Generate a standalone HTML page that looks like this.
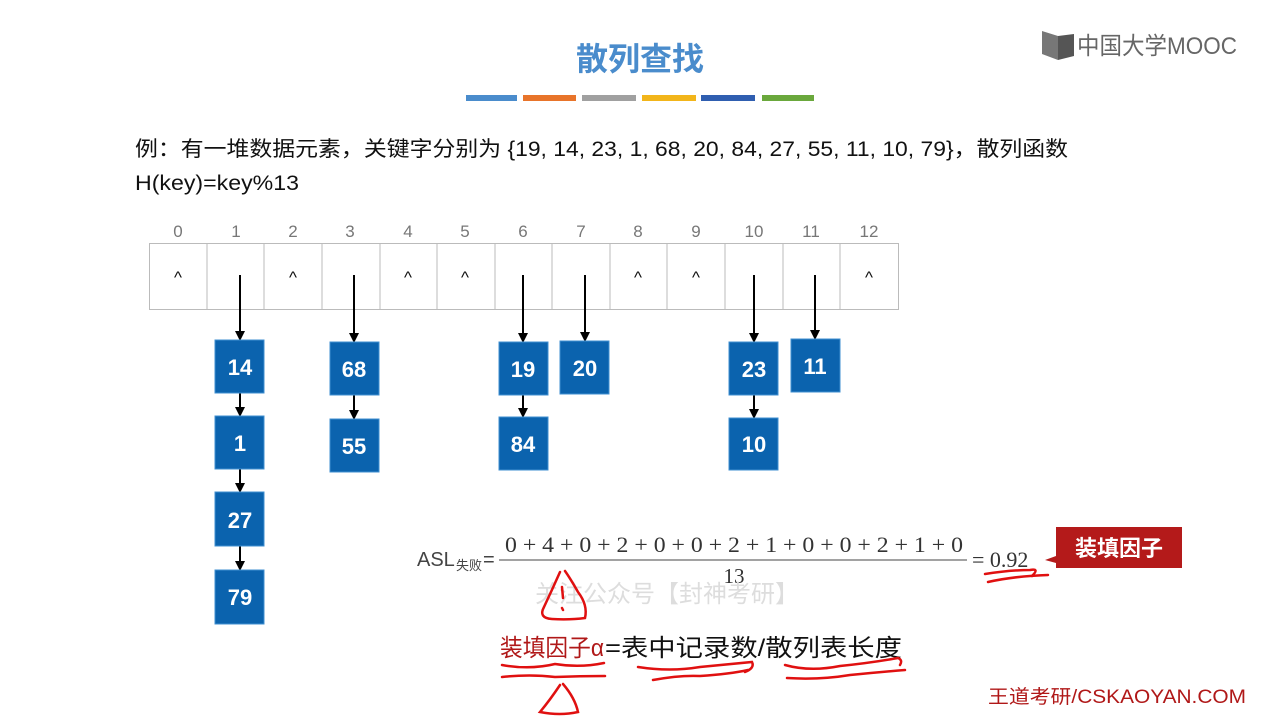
<!DOCTYPE html>
<html><head><meta charset="utf-8"><style>
html,body{margin:0;padding:0;background:#fff;width:1280px;height:720px;overflow:hidden}
svg{display:block}
text{font-family:"Liberation Sans","Noto Sans CJK SC",sans-serif}
.s{font-family:"Liberation Serif",serif}
</style></head><body>
<svg width="1280" height="720" viewBox="0 0 1280 720" xmlns="http://www.w3.org/2000/svg">
<defs><marker id="ah" markerWidth="10" markerHeight="10" refX="8" refY="5" orient="auto" markerUnits="userSpaceOnUse"><path d="M0,0 L10,5 L0,10 z" fill="#000"/></marker></defs>
<text x="640" y="70" text-anchor="middle" font-size="32" font-weight="bold" fill="#4a8ccc">散列查找</text>
<rect x="466" y="95" width="51" height="6" fill="#4a8ccc"/>
<rect x="523" y="95" width="53" height="6" fill="#e8742a"/>
<rect x="582" y="95" width="54" height="6" fill="#a0a0a0"/>
<rect x="642" y="95" width="54" height="6" fill="#f2b51a"/>
<rect x="701" y="95" width="54" height="6" fill="#2f5eb0"/>
<rect x="762" y="95" width="52" height="6" fill="#6aa83c"/>
<path d="M1042,31 L1058,36 L1058,60 L1042,54 z" fill="#777"/>
<path d="M1058,36 L1074,34 L1074,56 L1058,60 z" fill="#555"/>
<text x="1077" y="54" font-size="24" fill="#666" textLength="160" lengthAdjust="spacingAndGlyphs">中国大学MOOC</text>
<text x="135" y="156" font-size="21" fill="#111" textLength="933" lengthAdjust="spacingAndGlyphs">例：有一堆数据元素，关键字分别为 {19, 14, 23, 1, 68, 20, 84, 27, 55, 11, 10, 79}，散列函数</text>
<text x="135" y="190" font-size="21" fill="#111" textLength="164" lengthAdjust="spacingAndGlyphs">H(key)=key%13</text>
<g font-size="17" fill="#777" text-anchor="middle">
<text x="178" y="237">0</text><text x="236" y="237">1</text><text x="293" y="237">2</text><text x="350" y="237">3</text><text x="408" y="237">4</text><text x="465" y="237">5</text><text x="523" y="237">6</text><text x="581" y="237">7</text><text x="638" y="237">8</text><text x="696" y="237">9</text><text x="754" y="237">10</text><text x="811" y="237">11</text><text x="869" y="237">12</text>
</g>
<g fill="none" stroke="#bbb" stroke-width="1">
<rect x="149.5" y="243.5" width="749" height="66"/>
<path d="M207,244V309M264,244V309M322,244V309M380,244V309M437,244V309M495,244V309M552,244V309M610,244V309M667,244V309M725,244V309M783,244V309M840,244V309"/>
</g>
<g font-size="17" fill="#111" text-anchor="middle">
<text x="178" y="283">^</text><text x="293" y="283">^</text><text x="408" y="283">^</text><text x="465" y="283">^</text><text x="638" y="283">^</text><text x="696" y="283">^</text><text x="869" y="283">^</text>
</g>
<g stroke="#000" stroke-width="2" marker-end="url(#ah)">
<line x1="240" y1="275" x2="240" y2="339"/>
<line x1="354" y1="275" x2="354" y2="341"/>
<line x1="523" y1="275" x2="523" y2="341"/>
<line x1="585" y1="275" x2="585" y2="340"/>
<line x1="754" y1="275" x2="754" y2="341"/>
<line x1="815" y1="275" x2="815" y2="338"/>
<line x1="240" y1="393" x2="240" y2="415"/>
<line x1="240" y1="469" x2="240" y2="491"/>
<line x1="240" y1="546" x2="240" y2="569"/>
<line x1="354" y1="395" x2="354" y2="418"/>
<line x1="523" y1="395" x2="523" y2="416"/>
<line x1="754" y1="395" x2="754" y2="417"/>
</g>
<g fill="#0b63ae" stroke="#3f8fd0" stroke-width="1">
<rect x="215" y="340" width="49" height="53"/><rect x="215" y="416" width="49" height="53"/><rect x="215" y="492" width="49" height="54"/><rect x="215" y="570" width="49" height="54"/>
<rect x="330" y="342" width="49" height="53"/><rect x="330" y="419" width="49" height="53"/>
<rect x="499" y="342" width="49" height="53"/><rect x="499" y="417" width="49" height="53"/>
<rect x="560" y="341" width="49" height="53"/>
<rect x="729" y="342" width="49" height="53"/><rect x="729" y="418" width="49" height="52"/>
<rect x="791" y="339" width="49" height="53"/>
</g>
<g font-size="22" font-weight="bold" fill="#fff" text-anchor="middle">
<text x="240" y="375">14</text><text x="240" y="451">1</text><text x="240" y="528">27</text><text x="240" y="605">79</text>
<text x="354" y="377">68</text><text x="354" y="454">55</text>
<text x="523" y="377">19</text><text x="523" y="452">84</text>
<text x="585" y="376">20</text>
<text x="754" y="377">23</text><text x="754" y="452">10</text>
<text x="815" y="374">11</text>
</g>
<text x="417" y="566" font-size="20" fill="#444">ASL</text>
<text x="456" y="570" font-size="13" fill="#444">失败</text>
<text x="483" y="566" font-size="20" fill="#444">=</text>
<line x1="499" y1="560" x2="967" y2="560" stroke="#444" stroke-width="1"/>
<text x="734" y="552" font-size="22" fill="#333" text-anchor="middle" class="s" textLength="458" lengthAdjust="spacingAndGlyphs">0 + 4 + 0 + 2 + 0 + 0 + 2 + 1 + 0 + 0 + 2 + 1 + 0</text>
<text x="734" y="583" font-size="21" fill="#333" text-anchor="middle" class="s">13</text>
<text x="972" y="567" font-size="22" fill="#333" class="s">= 0.92</text>
<path d="M1056,527 H1182 V568 H1056 V563 L1045,560 L1056,556 z" fill="#b41a1a"/>
<text x="1119" y="556" font-size="22" font-weight="bold" fill="#fff" text-anchor="middle">装填因子</text>
<text x="535" y="602" font-size="24" fill="#ddd">关注公众号【封神考研】</text>
<text x="500" y="656" font-size="24" fill="#b01818" textLength="104" lengthAdjust="spacingAndGlyphs">装填因子α</text>
<text x="605" y="656" font-size="24" fill="#111" textLength="297" lengthAdjust="spacingAndGlyphs">=表中记录数/散列表长度</text>
<g fill="none" stroke="#e01010" stroke-width="2.5" stroke-linecap="round">
<path d="M985,574 Q1010,570 1030,570 Q1040,568 1032,576"/>
<path d="M988,582 Q1015,576 1048,575"/>
<path d="M560,572 Q552,590 544,607 Q538,618 552,619 Q570,620 585,618 Q588,605 578,592 Q570,578 565,571"/>
<path d="M562,587 L563,598"/><path d="M562,608 L563,610"/>
<path d="M502,665 Q530,670 555,664 Q580,668 604,663"/>
<path d="M502,677 Q530,674 555,677 Q580,676 605,676"/>
<path d="M560,685 Q550,700 540,712 Q560,716 578,712 Q575,698 563,684"/>
<path d="M638,667 Q670,672 700,667 Q730,664 752,662 Q755,668 745,672"/>
<path d="M653,680 Q680,675 700,676 Q730,674 748,670"/>
<path d="M785,665 Q810,672 840,666 Q870,663 898,658 Q903,660 900,665"/>
<path d="M787,678 Q820,680 850,675 Q880,672 905,670"/>
</g>
<text x="988" y="703" font-size="19" fill="#b01818" textLength="258" lengthAdjust="spacingAndGlyphs">王道考研/CSKAOYAN.COM</text>
</svg>
</body></html>
